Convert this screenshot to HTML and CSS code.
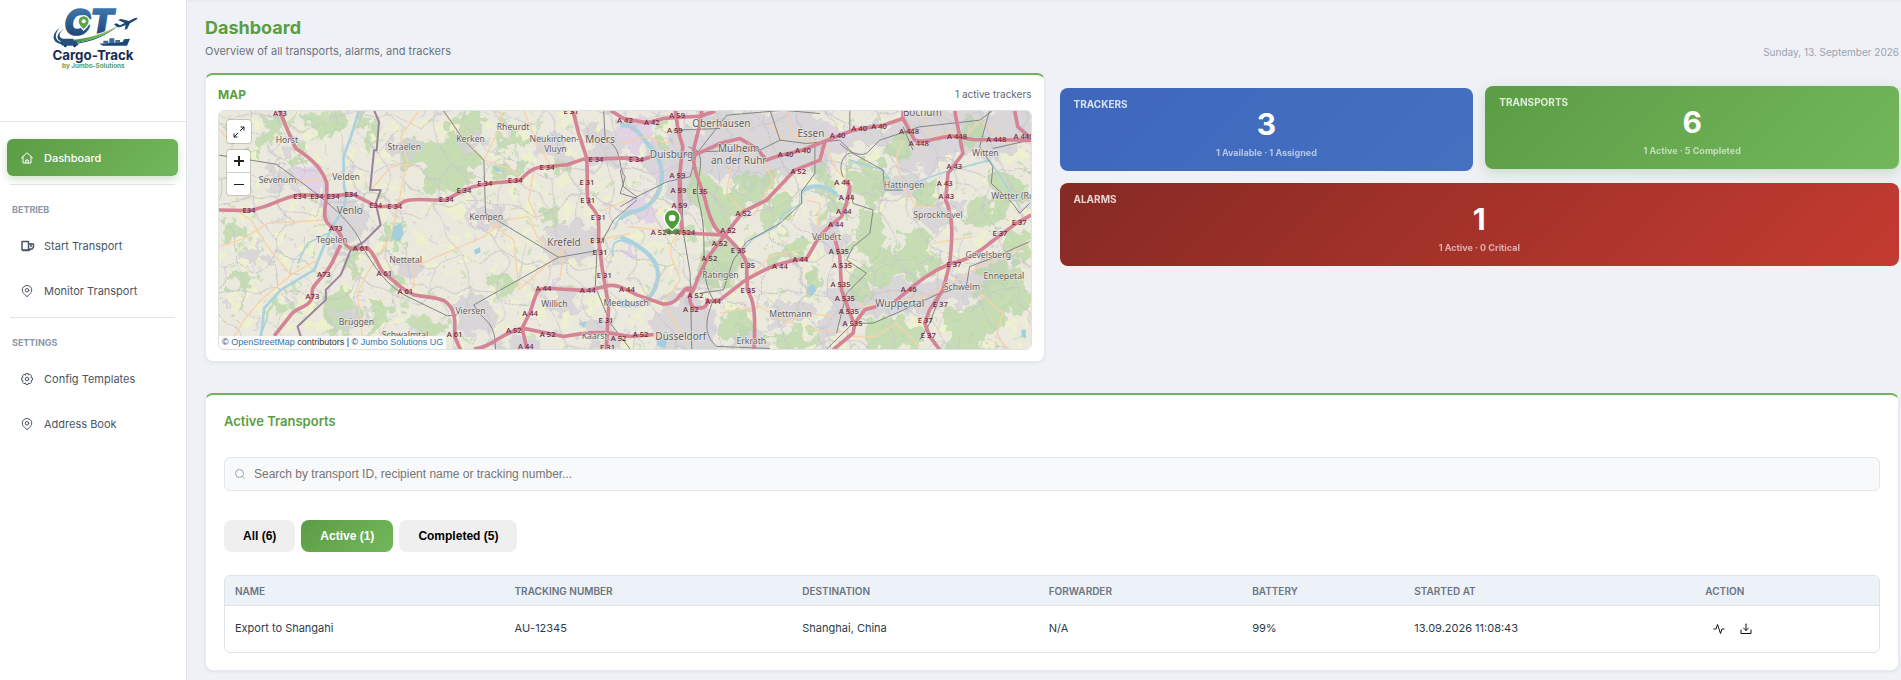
FILE: index.html
```html
<!DOCTYPE html>
<html lang="en">
<head>
<meta charset="utf-8">
<title>Cargo-Track Dashboard</title>
<link rel="stylesheet" href="styles.css">
</head>
<body>
<div class="app">
  <aside class="sidebar">
    <div class="brand">
      <svg class="logo" viewBox="0 0 330 240" role="img" aria-label="Cargo-Track by Jumbo-Solutions">
        <defs>
          <linearGradient id="blue" x1="0" y1="0" x2="0" y2="1"><stop offset="0" stop-color="#4583bb"/><stop offset="1" stop-color="#173b6b"/></linearGradient>
          <linearGradient id="swoosh" x1="0" y1="0" x2="1" y2="0"><stop offset="0" stop-color="#1d4674"/><stop offset=".5" stop-color="#5fae4d"/><stop offset="1" stop-color="#9ccb6a"/></linearGradient>
        </defs>
        <text class="logo-mark" x="73" y="104" fill="url(#blue)" stroke="url(#blue)">C</text>
        <text class="logo-mark" x="150" y="104" fill="url(#blue)" stroke="url(#blue)">T</text>
        <path d="M131 47c-10 0-17 8-17 17 0 11 17 26 17 26s17-15 17-26c0-9-7-17-17-17z" fill="#5aa646" stroke="#fff" stroke-width="4"/>
        <circle cx="131" cy="64" r="6" fill="#fff"/>
        <path d="M66 76C30 104 30 136 78 136c60 0 120-24 160-60-44 22-100 38-148 38-30 0-38-16-24-38z" fill="#fff"/>
        <path d="M60 82C30 106 34 134 80 134c52 0 112-20 158-58-48 34-106 54-150 54-44 0-50-22-28-48z" fill="#24507e"/>
        <path d="M72 86c-24 20-14 34 20 33 44-1 98-17 140-42-40 32-92 52-140 51-44 0-52-20-20-42z" fill="url(#swoosh)"/>
        <path d="M62 116h38v8h9l6 9-3 4H68l-6-5z" fill="#24507e"/>
        <circle cx="76" cy="138" r="4" fill="#163556"/><circle cx="104" cy="138" r="4" fill="#163556"/>
        <path d="M178 131l70-5 4-8 18-2-9 21h-72z" fill="#1c4674"/>
        <path d="M190 122h15v8h-15zM208 115h15v14h-15zM226 120h14v8h-14z" fill="#386b98"/>
        <path d="M222 73l8-3 10 6 14-7-20-9 9-3 24 6 16-8c9-4 14 0 3 6l-16 9-9 17-7 2 3-14-17 7-9-1z" fill="#1d4674"/>
        <text class="logo-name" x="159" y="180" text-anchor="middle">Cargo-Track</text>
        <text class="logo-sub" x="160" y="204" text-anchor="middle">by Jumbo-Solutions</text>
      </svg>
    </div>
    <nav class="nav">
      <a class="nav-item active" href="#"><svg class="icon" viewBox="0 0 24 24"><path d="M1 12 12 1.500 23 12M4 9.500V22h16V9.500M9.500 22v-6h5v6"/></svg>Dashboard</a>
      <hr class="nav-line">
      <h2 class="nav-title">BETRIEB</h2>
      <a class="nav-item" href="#"><svg class="icon truck" viewBox="0 0 28 24"><path d="M2 3h13v17H2zM15 19V8h10v6l-3 4h-4v2"/><path d="M4 21h12M20 8v5"/></svg>Start Transport</a>
      <a class="nav-item" href="#"><svg class="icon" viewBox="0 0 24 24"><path d="M12 23s9.500-6 9.500-13a9.500 9 0 0 0-19 0C2.500 17 12 23 12 23z"/><circle cx="12" cy="10.500" r="3.500"/></svg>Monitor Transport</a>
      <hr class="nav-line">
      <h2 class="nav-title">SETTINGS</h2>
      <a class="nav-item" href="#"><svg class="icon" viewBox="0 0 24 24"><path d="M9 4l1-3h4l1 3 3-1.500 3 3L20 9l3 1v4l-3 1 1 3.500-3 3-3-1.500-1 3h-4l-1-3-3 1.500-3-3L4 15l-3-1v-4l3-1-1-3.500 3-3z"/><circle cx="12" cy="12" r="3.500"/></svg>Config Templates</a>
      <a class="nav-item" href="#"><svg class="icon" viewBox="0 0 24 24"><path d="M12 23s9.500-6 9.500-13a9.500 9 0 0 0-19 0C2.500 17 12 23 12 23z"/><circle cx="12" cy="10.500" r="3.500"/></svg>Address Book</a>
    </nav>
  </aside>

  <main class="main">
    <header class="page-head">
      <div>
        <h1 class="page-title">Dashboard</h1>
        <p class="page-sub">Overview of all transports, alarms, and trackers</p>
      </div>
      <time class="date" datetime="2026-09-13">Sunday, 13. September 2026</time>
    </header>

    <div class="overview">
      <section class="card map-card">
        <div class="map-head"><h2 class="map-title">MAP</h2><span class="map-count">1 active trackers</span></div>
        <div class="map">
          <svg class="map-art" viewBox="54 150 2439 720" preserveAspectRatio="xMidYMid slice" role="img" aria-label="Map of the Rhine-Ruhr area">
            <defs>
              <filter id="ragged" x="0" y="0" width="2560" height="1000" filterUnits="userSpaceOnUse">
                <feTurbulence type="fractalNoise" baseFrequency=".022" numOctaves="3" seed="4"/>
                <feDisplacementMap in="SourceGraphic" scale="110" xChannelSelector="R" yChannelSelector="G"/>
              </filter>
              <filter id="winding" x="0" y="0" width="2560" height="1000" filterUnits="userSpaceOnUse">
                <feTurbulence type="fractalNoise" baseFrequency=".009" numOctaves="2" seed="9"/>
                <feDisplacementMap in="SourceGraphic" scale="90" xChannelSelector="R" yChannelSelector="G"/>
              </filter>
              <pattern id="lanes" width="330" height="270" patternUnits="userSpaceOnUse">
                <path class="lane" d="M0 60L60 85 110 50 180 75 240 30 330 60M60 85L45 170 90 270M90 0L110 50 150 140 140 200 220 270M0 200L45 170 150 140 230 160 330 200M240 30L230 160 265 215 220 270M220 0L240 30M300 0L285 110 330 130M0 130L45 170"/>
              </pattern>
              <pattern id="fields" width="210" height="170" patternUnits="userSpaceOnUse">
                <path class="field" d="M10 15l30-8 15 16-20 18zM80 45l34-10 12 18-26 20zM140 10l26 6-6 24-28-8zM30 90l26-6 10 26-30 10zM110 110l36-10 15 20-30 20zM170 66l24 8-10 24-20-6z"/>
                <path class="grove" d="M54 8l12-4 8 14-12 8zM120 56l12 4-4 14-12-4zM14 60l14 4-6 12zM90 96l12-6 6 12-12 4zM180 30l12-4 4 14-12 4zM150 146l14-4 6 10-12 6z"/>
                <path class="hamlet" d="M66 30l12-2 6 10-14 4zM160 100l14-4 4 12-12 4zM10 136l15-4 4 14-15 2zM100 8l10-4 6 10z"/>
              </pattern>
            </defs>
            <rect class="land" x="0" y="0" width="2560" height="1000"/>
            <g filter="url(#ragged)">
            <rect x="0" y="0" width="2560" height="1000" fill="url(#fields)"/>
            <g class="forest">
              <path d="M195 170l40-15 10 30-35 60-45 20zM310 170l80-20 50 10-30 50-60 40zM250 300l50-30 20 20-40 50zM130 270l50-20-10 30zM485 170l30-10 10 80-20 60-14-60zM590 250l40-20 90 20 70-20 40 60-10 60-60 30-70 20-40-30 30-40-70-20zM700 300l60-20 60 40-20 70-80 10zM740 180l60-20 60 10-20 60-70 10zM880 310l60-10 40 30-50 30zM1035 440l30-30 20 60-10 40-30-10zM530 520l40-40 30 50-30 40zM80 480l50 10-10 40-40 10zM90 640l50-10 20 60-60 10zM210 720l60-10 10 40-60 10zM385 700l50-10 40 60-50 70-60-10zM520 720l60 20-10 60-60 20zM620 750l60 10 60 50-60 20-60-30zM880 640l60 10-10 40-60-10zM440 550l30 20-10 60-30 20zM570 640l40 30-10 30zM900 230l50-10 20 30-60 20zM1060 290l40 0-10 50-40 0z"/>
            </g>
            <g class="urban">
              <path d="M245 225l50-5 5 50-50 10zM380 430l80-20 50 50-20 80-60 10-50-50zM570 240l80 0 0 40-70 10zM770 225l70-5 10 40-70 10zM820 440l90-10 10 70-70 10zM1010 220l90 10 0 70-80-10zM1150 190l110 10 10 100-100 20zM1040 500l130-20 30 80-70 60-90-20zM580 600l80 0 10 50-70 10zM1020 700l90 0 10 60-80 10zM760 720l110 0 20 90-90 10zM400 760l110 0-10 50-90-10zM1140 790l100 0 10 70-90 10zM200 330l80 10-10 50-70-10zM370 540l50 0 10 40-50 10zM130 550l60 0 0 50-60 10zM920 830l120 10-10 40-120 0z"/>
            </g>
            <path class="industry" d="M280 330l90-10 0 60-80 20zM350 385l40 0-10 60-30-10zM1055 640l30 0 0 40-30 0z"/>
            <g transform="translate(1260 0)">
              <path class="urban" d="M90 240l110-30 50 90-30 140-70 20-30-110-60-40zM230 150l360-10 60 90 160-40 40-50 390 0 10 110-100 40-160-10-60 60-70-10-40-80-120 10-90 70-130 20-70 30-100-30-90-10zM580 490l80-10 30 70-70 40zM120 700l130 20 50 70-10 90-180 0-20-90zM640 690l260-30 90 20 160-120 60 10-60 110-180 60-120 20-170 10-40 90-60 0zM230 620l110 0 10 60-110 10zM340 800l110 0 0 80-110 0zM440 720l130 10-20 60-100 0zM880 430l130 10 0 60-120 0zM780 350l140-10 10 60-140 0zM970 650l130 0 0 60-120 0z"/>
              <path class="industry" d="M10 160l60 0 30 60-50 60-50-50zM60 410l70 40-40 40-60-20zM120 300l40 20 0 60-30-10zM10 540l40 30-30 30zM620 200l70 0-10 40-60-10z"/>
              <path class="forest" d="M210 350l40-20 40 60 70 0 20 60-60 70-60-20-40-70zM265 540l80 0 30 60-20 80-80 10-50-40 20-70zM130 510l80-10 0 30-70 10zM310 740l50-10 40 60-30 60-60-10zM360 350l80-20 20 40-40 60-50 10zM450 400l60 0 20 50-60 40-60 0zM450 560l80 0 40-40 20 40-60 50-90 10zM600 400l60 0 10 50-60 30zM690 290l100 20 30 70-60 60-60-50zM720 450l60 10 30 60-60 70-50-20zM820 220l60 20-20 60-60-10zM880 380l60-10 20 50-60 10zM1030 170l60 10 10 60-60 30zM1110 350l100-10 30 60-70 60-60-20zM1030 450l80-20 60 30-100 50zM1080 620l120-10 30 130-90 60-60-60zM980 750l90-20 60 60-40 90-120 0zM720 780l130-10 60 40-20 60-150 0zM760 570l60 0 50 70-80 50-60-40zM700 640l50 10 0 70-60-10zM840 520l100 10 20 90-80 40-50-60zM560 640l50 0 10 40-50 10zM450 820l90-10 70 50-130 20zM560 340l50-40 30 50-60 30zM1150 500l80 10 0 90-60-10zM100 200l40 0 10 60-40-20z"/>
            </g>
            </g>

            <path class="water" d="M475 150L450 230 428 290 430 380C450 440 400 480 385 520L340 630 240 690 190 745 180 830"/>
            <path class="water thin" d="M1240 510c20-50 40-60 60-60M1290 550c-40-20-60 0-50 40M170 850l30-80M380 520l-60 30-30 60"/>
            <path class="pond" d="M575 500l25-10 10 30-15 25-25-10zM820 570l18-8 2 16-16 6zM875 315l20 10 20 12-30-4zM1135 790l24-4-8 16zM900 475l30 4-20 8z"/>
            <g transform="translate(1260 0)">
              <path class="water wide" d="M0 195C50 190 60 230 90 260C130 300 140 370 100 420C70 460 20 450 0 478M0 530C60 555 125 600 112 660C100 730 40 740 0 735"/>
              <path class="water wide" d="M545 395C570 375 610 370 650 402"/>
              <path class="water thin" d="M545 395L545 430 490 460 470 500 400 535 350 590M650 402L690 430M690 300L790 330 830 390 960 340 1110 300 1200 440"/>
              <path class="pond" d="M565 680l15-8 10 20-15 18-12-10zM110 835l30 4-4 26-24-6zM1205 810l14 0 0 26-12-6zM540 530l10-4 4 12z"/>
            </g>
            <g filter="url(#winding)"><rect x="0" y="0" width="2560" height="1000" fill="url(#lanes)"/></g>

            <g class="road">
              <path d="M54 205L90 250M54 560L130 535 200 490 370 480M90 440L150 480 200 560 270 645 350 600M270 645L180 720 130 780 100 830M655 150L600 230 620 300 600 400 570 530 500 640 470 700 485 830M510 390L570 320 640 310M725 150L790 240 850 300M900 150C910 210 880 230 860 280L850 300 940 330 960 360M970 150L1010 250 1060 330M910 480L985 470 1010 530 1075 590M910 480L850 530 640 620 640 680 600 710M870 490L940 540 955 690M955 690L1100 560 1290 520M1010 480L985 420 1000 330M1080 650L1090 560M285 365L370 355M1210 450L1280 420M380 340L440 360"/>
              <g transform="translate(1260 0)">
                <path d="M0 250L70 230 150 250M120 510L20 500M180 520C120 560 170 620 180 660L130 730 200 850M340 270L320 400 370 455M430 300L460 360 400 470M450 190L500 250M560 420L600 430 590 540M620 260L650 330 700 380M850 240L830 290 850 380 890 440 950 440M900 150L940 230 1010 210M380 660L450 590 540 570M300 760L420 740 500 790 560 760 640 770M560 800C600 830 680 800 700 830L770 830 830 790 900 860M720 740L830 730 940 700 1080 620 1230 550M1060 530L940 550M1030 240L1080 180 1180 260M60 830L150 830M1080 700L1150 760 1130 830 1170 870M500 150L520 230 600 250"/>
              </g>
            </g>

            <g class="rail">
              <path d="M54 285L225 312C350 400 460 480 485 560C520 620 560 680 620 710L740 768 770 765M728 150L790 240 850 300 855 460 1075 592 1190 572M1075 592L820 735C850 790 885 780 885 868M1210 150L1215 240C1270 260 1250 320 1275 350L1260 400 1310 415M1190 572L1185 680 1230 790 1290 868M1190 572L1240 480 1310 420"/>
              <g transform="translate(1260 0)">
                <path d="M205 260L230 270C260 310 220 360 235 420C270 540 230 640 280 720C250 790 255 830 290 860L450 866M182 340L190 520 210 640 215 868M0 440L50 410 140 365 210 350 230 280 320 165 490 150 600 160M220 275L420 270 480 240 560 250 660 240 700 280 790 330 795 390 850 390M450 150L480 240M690 150L690 210M660 250C680 270 710 290 740 280L780 240 900 200 1080 180 1120 150M690 390L700 430 760 450 750 520 700 560 680 600M585 250L585 340 545 395 545 430 480 490 380 545 340 600 310 690 240 700M670 350C650 310 680 270 700 280M1110 150L1080 260 1120 320 1115 370 1180 430 1200 460 1230 430M1230 545L1130 590 1050 620 1040 680 960 700 830 760 760 790 700 790 620 868M680 600L740 640 680 700 650 820M850 200L880 270M1120 265L1230 240M960 710L930 790 900 840M0 330L10 380 50 410M160 210L300 205"/>
              </g>
            </g>
            <path class="frontier" d="M520 150L535 185 528 270 520 270 508 390 540 390 525 430 540 495 490 545 450 570 420 645 375 690 375 720 290 800 300 830"/>

            <g class="motorway">
              <path d="M236 150L262 215 285 265C340 300 365 330 378 370L378 400 372 450C368 490 390 500 405 506C430 530 425 560 455 566L500 564C530 590 530 620 550 640C580 660 600 690 640 705C700 715 700 710 730 722C765 745 765 780 762 830L780 870M420 555C400 590 395 620 370 642C340 680 330 680 335 710C325 745 290 740 270 765L220 828"/>
              <path d="M54 450L140 452C220 440 240 410 300 404L378 408 455 402 500 425 530 440 590 438C620 410 650 420 735 420L790 390C850 365 900 370 960 360C990 325 1010 320 1040 320L1100 314 1150 297 1310 293"/>
              <path d="M1105 130L1120 160 1135 220 1158 290C1165 340 1155 400 1165 430C1200 470 1195 470 1195 540L1205 620 1225 740 1218 870"/>
              <path d="M980 870L965 805 990 755C1010 690 1010 685 1040 685L1160 692 1215 680C1240 670 1260 680 1310 705L1390 733C1440 730 1430 705 1460 685L1480 685M820 868C880 860 900 820 965 805L1090 830C1150 820 1180 815 1230 820L1290 830 1360 824"/>
              <g transform="translate(1260 0)">
                <path d="M-30 150L10 175 80 188 130 175 170 172 240 168 285 153M0 293L60 300 95 290M165 150L175 215 188 260 178 350 178 440 185 516M245 150L240 190 220 270C215 340 250 380 260 440C275 490 290 520 315 525C350 560 380 590 380 620L382 690C400 720 408 750 402 870"/>
                <path d="M140 515L250 522 315 525M190 280L230 282 300 250 360 235 410 265 440 300C500 275 530 280 560 265L610 245 700 210 790 195 850 175 850 150M850 175L885 240C930 250 940 230 1000 228L1060 238 1235 240M1185 150L1195 200 1230 230"/>
                <path d="M615 245L600 300 525 330 440 420 370 455 315 525 265 590 235 650 220 690C200 710 210 750 235 745C260 745 265 730 260 715M220 690L195 690 180 710M260 725L300 720 370 665C430 630 460 610 560 595C590 550 590 530 640 490L665 470 680 430 690 380 675 360M640 520L660 590 665 690 700 785M1005 150L1020 230 1030 280 985 340 978 420C1000 470 1000 520 990 612L970 690 930 750 915 790 930 830 960 870"/>
                <path d="M1235 465L1190 490 1110 550C1060 590 1040 600 990 612C920 640 880 680 825 725M770 740L735 750 705 790 700 820 640 870"/>
              </g>
            </g>

            <g class="shield">
              <text x="237" y="168">A73</text><text x="297" y="416">E34</text><text x="348" y="416">E34</text><text x="397" y="416">E34</text><text x="451" y="411">E34</text><text x="144" y="460">E34</text><text x="525" y="443">E34</text><text x="582" y="448">E 34</text><text x="405" y="513">A73</text><text x="480" y="574">A 61</text><text x="369" y="650">A73</text><text x="335" y="718">A73</text><text x="551" y="648">A 61</text><text x="614" y="702">A 61</text><text x="762" y="831">A 61</text><text x="737" y="425">E 34</text><text x="790" y="399">E 34</text><text x="853" y="378">E 34</text><text x="944" y="369">E 34</text><text x="1040" y="329">E 34</text><text x="1187" y="306">E 34</text><text x="1112" y="161">E 31</text><text x="1160" y="374">E 31</text><text x="1162" y="430">E 31</text><text x="1194" y="480">E 31</text><text x="1192" y="549">E 31</text><text x="1199" y="586">E 31</text><text x="1212" y="654">E 31</text><text x="1217" y="791">E 31</text><text x="1029" y="694">A 44</text><text x="1162" y="698">A 44</text><text x="989" y="768">A 44</text><text x="940" y="820">A 52</text><text x="1042" y="831">A 52</text><text x="976" y="869">A 44</text><text x="1255" y="843">A 52</text><text x="1222" y="872">E 31</text>
              <g transform="translate(1260 0)">
                <text x="14" y="187">A 42</text><text x="95" y="193">A 42</text><text x="171" y="174">A 59</text><text x="164" y="219">A 59</text><text x="48" y="306">E 34</text><text x="172" y="355">A 59</text><text x="175" y="398">A 59</text><text x="178" y="445">A 59</text><text x="240" y="402">E 35</text><text x="122" y="526">A 524</text><text x="195" y="526">A 524</text><text x="324" y="520">A 52</text><text x="299" y="559">A 52</text><text x="268" y="603">A 52</text><text x="370" y="469">A 52</text><text x="535" y="341">A 52</text><text x="497" y="290">A 40</text><text x="549" y="278">A 40</text><text x="653" y="234">A 40</text><text x="718" y="211">A 40</text><text x="778" y="205">A 40</text><text x="868" y="220">A 448</text><text x="897" y="257">A 448</text><text x="1012" y="236">A 448</text><text x="1130" y="247">A 448</text><text x="1212" y="235">A 448</text><text x="1004" y="326">A 43</text><text x="975" y="378">A 43</text><text x="980" y="418">A 43</text><text x="667" y="376">A 44</text><text x="680" y="420">A 44</text><text x="672" y="462">A 44</text><text x="648" y="501">A 44</text><text x="657" y="583">A 535</text><text x="667" y="625">A 535</text><text x="662" y="682">A 535</text><text x="675" y="723">A 535</text><text x="687" y="762">A 535</text><text x="698" y="799">A 535</text><text x="355" y="579">E 35</text><text x="383" y="623">E 35</text><text x="384" y="700">E 35</text><text x="480" y="627">A 44</text><text x="541" y="607">A 44</text><text x="20" y="696">A 44</text><text x="226" y="715">A 52</text><text x="279" y="731">A 44</text><text x="212" y="757">A 52</text><text x="61" y="833">A 52</text><text x="867" y="697">A 46</text><text x="1199" y="495">E 37</text><text x="1141" y="528">E 37</text><text x="1003" y="620">E 37</text><text x="962" y="742">E 37</text><text x="917" y="789">E 37</text><text x="926" y="835">E 37</text>
              </g>
            </g>
            <g class="town">
              <text x="258" y="248">Horst</text><text x="230" y="368">Sevenum</text><text x="436" y="360">Velden</text><text x="611" y="270">Straelen</text><text x="810" y="247">Kerken</text><text x="938" y="208">Rheurdt</text><text x="1062" y="247">Neukirchen-</text><text x="1065" y="277">Vluyn</text><text x="393" y="550">Tegelen</text><text x="615" y="608">Nettetal</text><text x="857" y="480">Kempen</text><text x="810" y="762">Viersen</text><text x="467" y="797">Brüggen</text><text x="613" y="835">Schwalmtal</text><text x="1062" y="742">Willich</text><text x="1278" y="739">Meerbusch</text><text x="1183" y="839">Kaarst</text>
              <text class="city" x="447" y="462">Venlo</text><text class="city" x="1199" y="248">Moers</text><text class="city" x="1091" y="559">Krefeld</text>
              <g transform="translate(1260 0)">
                <text class="city" x="304" y="200">Oberhausen</text><text class="city" x="154" y="293">Duisburg</text><text class="city" x="356" y="276">Mülheim</text><text class="city" x="356" y="311">an der Ruhr</text><text class="city" x="573" y="230">Essen</text><text class="city" x="908" y="168">Bochum</text><text class="city" x="182" y="840">Düsseldorf</text><text class="city" x="840" y="740">Wuppertal</text><text x="1097" y="288">Witten</text><text x="853" y="384">Hattingen</text><text x="1180" y="417">Wetter (Ru</text><text x="955" y="473">Sprockhövel</text><text x="620" y="541">Velbert</text><text x="1106" y="593">Gevelsberg</text><text x="1153" y="656">Ennepetal</text><text x="1027" y="689">Schwelm</text><text x="301" y="654">Ratingen</text><text x="512" y="771">Mettmann</text><text x="394" y="854">Erkrath</text>
              </g>
            </g>
            <g transform="translate(1260 0)">
              <ellipse cx="156" cy="513" rx="26" ry="9" fill="#3d8a35" opacity=".7"/>
              <path d="M156 449c-14 0-24 11-24 25 0 17 24 37 24 37s24-20 24-37c0-14-10-25-24-25z" fill="#4b9b3a" stroke="#fff" stroke-width="4"/>
              <circle cx="156" cy="474" r="10" fill="#fff"/>
            </g>
          </svg>
          <div class="map-tools">
            <button class="tool full" type="button" aria-label="Full screen"><svg class="tool-icon" viewBox="0 0 12 12"><path d="M7.500 1H11v3.500M11 1 7 5M4.500 11H1V7.500M1 11l4-4"/></svg></button>
            <div class="zoom">
              <button class="tool" type="button" aria-label="Zoom in"><svg class="tool-icon bold" viewBox="0 0 12 12"><path d="M6 1v10M1 6h10"/></svg></button>
              <button class="tool" type="button" aria-label="Zoom out"><svg class="tool-icon" viewBox="0 0 12 12"><path d="M1 6.500h10"/></svg></button>
            </div>
          </div>
          <div class="credits">© <a href="#">OpenStreetMap</a> contributors | © <a href="#">Jumbo Solutions UG</a></div>
        </div>
      </section>

      <div class="stats">
        <section class="stat blue"><h2 class="stat-label">TRACKERS</h2><strong class="stat-value">3</strong><span class="stat-note">1 Available · 1 Assigned</span></section>
        <section class="stat green"><h2 class="stat-label">TRANSPORTS</h2><strong class="stat-value">6</strong><span class="stat-note">1 Active · 5 Completed</span></section>
        <section class="stat red"><h2 class="stat-label">ALARMS</h2><strong class="stat-value">1</strong><span class="stat-note">1 Active · 0 Critical</span></section>
      </div>
    </div>

    <section class="card list-card">
      <h2 class="list-title">Active Transports</h2>
      <label class="search">
        <svg class="search-icon" viewBox="0 0 12 12"><circle cx="5.500" cy="5.500" r="4"/><path d="M8.500 8.500 10.500 10.500"/></svg>
        <input class="search-input" type="text" aria-label="Search transports" placeholder="Search by transport ID, recipient name or tracking number...">
      </label>
      <div class="tabs">
        <button class="tab" type="button">All (6)</button>
        <button class="tab on" type="button">Active (1)</button>
        <button class="tab" type="button">Completed (5)</button>
      </div>
      <div class="table-box">
        <table class="table">
          <colgroup><col class="c-name"><col class="c-num"><col class="c-dest"><col class="c-fwd"><col class="c-bat"><col class="c-start"><col class="c-act"></colgroup>
          <thead><tr><th>NAME</th><th>TRACKING NUMBER</th><th>DESTINATION</th><th>FORWARDER</th><th>BATTERY</th><th>STARTED AT</th><th>ACTION</th></tr></thead>
          <tbody><tr><td>Export to Shangahi</td><td>AU-12345</td><td>Shanghai, China</td><td>N/A</td><td>99%</td><td>13.09.2026 11:08:43</td>
            <td><div class="actions">
              <button class="act" type="button" aria-label="Activity"><svg class="act-icon" viewBox="0 0 24 24"><path d="M22 12h-4l-3 9L9 3l-3 9H2"/></svg></button>
              <button class="act" type="button" aria-label="Download"><svg class="act-icon" viewBox="0 0 24 24"><path d="M2 14v7h20v-7M7 10l5 5 5-5M12 15V2"/></svg></button>
            </div></td></tr></tbody>
        </table>
      </div>
    </section>
  </main>
</div>
</body>
</html>
```
FILE: styles.css
```css
* { box-sizing: border-box; }
body { margin: 0; background: #eff1f6; color: #2f3a4a; font-family: Inter, "Liberation Sans", sans-serif; font-size: 11px; }
h1, h2, p { margin: 0; }
a { text-decoration: none; }
button { font: inherit; border: 0; padding: 0; cursor: pointer; }
svg { display: block; }

.app { display: flex; min-height: 100vh; }

.sidebar { flex: 0 0 187px; background: #fff; border-right: 1px solid #e0e3e8; }
.brand { height: 122px; padding-left: 40px; border-bottom: 1px solid #dfe2e6; }
.logo { width: 110px; height: 80px; }
.logo-mark { font: italic 800 106px Inter, sans-serif; stroke-width: 5px; }
.logo-name { font: 700 40px Inter, sans-serif; fill: #182d50; }
.logo-sub { font: 700 19px Inter, sans-serif; fill: #5d9c58; }
.nav { padding: 17px 8px 17px 7px; }
.nav-item { display: flex; align-items: center; gap: 11px; height: 37px; margin-bottom: 8px; padding: 0 14px; border-radius: 6px; color: #4b5563; font-size: 11px; font-weight: 400; white-space: nowrap; }
.nav-item.active { background: linear-gradient(135deg, #5b9d44, #73b75c); color: #fff; font-weight: 500; box-shadow: 0 3px 8px rgba(91, 157, 68, .3); }
.icon { flex: none; width: 12px; height: 12px; fill: none; stroke: currentColor; stroke-width: 2; stroke-linejoin: round; stroke-linecap: round; }
.truck { margin-right: -2px; width: 14px; stroke-width: 3; }
.nav-line { height: 1px; margin: 0 3px 19px; border: 0; background: #e0e3e8; }
.nav-title { margin: 0 5px 11px; font-size: 9px; line-height: 12px; font-weight: 700; color: #8b97a6; }

.main { flex: 1; min-width: 0; padding: 14px 2px 10px 18px; border-top: 2px solid #e9ebf0; }
.page-head { display: flex; justify-content: space-between; align-items: flex-end; margin-bottom: 14px; }
.page-title { font-size: 18px; line-height: 24px; font-weight: 700; color: #5b9d44; }
.page-sub { margin-top: 3px; font-size: 11px; line-height: 16px; color: #6b7482; }
.date { font-size: 10px; line-height: 14px; color: #9aa3b2; }

.card { background: #fff; border: 1px solid #e6e9ef; border-top: 2px solid #73b060; border-radius: 8px; box-shadow: 0 1px 3px rgba(30, 50, 80, .08); }
.overview { display: grid; grid-template-columns: 1fr 1fr; gap: 15px; align-items: start; margin-bottom: 31px; }
.map-card { padding: 11px 12px; }
.map-head { display: flex; justify-content: space-between; align-items: center; height: 16px; margin-bottom: 8px; }
.map-title { font-size: 12px; font-weight: 700; color: #5b9d44; }
.map-count { font-size: 10px; color: #5f6875; }
.map { position: relative; height: 240px; border: 1px solid #dfe2e2; border-radius: 6px; overflow: hidden; }
.map-art { width: 100%; height: 100%; }
.land { fill: #ebe9dd; }
.field { fill: #eef1cd; }
.grove { fill: #cbe0b8; }
.hamlet { fill: #dad7dc; }
.forest { fill: #b9d7a7; opacity: .75; }
.urban { fill: #d3d1d7; opacity: .8; }
.industry { fill: #e2d3e4; }
.lane { fill: none; stroke: #c8c4cd; stroke-width: 3; stroke-linejoin: round; }
.water { fill: none; stroke: #a8d3de; stroke-width: 8; stroke-linejoin: round; }
.water.thin { stroke-width: 5; }
.water.wide { stroke-width: 13; }
.pond { fill: #a0cfdd; }
.road { fill: none; stroke: #f8d2a6; stroke-width: 4; stroke-linejoin: round; }
.rail { fill: none; stroke: #838585; stroke-width: 3; stroke-linejoin: round; }
.frontier { fill: none; stroke: #9a819d; stroke-width: 6; stroke-linejoin: round; }
.motorway { fill: none; stroke: #d48494; stroke-width: 11; stroke-linejoin: round; }
.shield { font: 500 23px "Noto Sans", sans-serif; fill: #71253c; text-anchor: middle; }
.town { font: 26px "Noto Sans", sans-serif; fill: #5d5a5d; text-anchor: middle; stroke: #f2f0ea; stroke-width: 3; paint-order: stroke; }
.town .city { font-size: 30px; }

.map-tools { position: absolute; top: 9px; left: 8px; }
.tool { display: grid; place-items: center; width: 23px; height: 22px; background: #fff; color: #222; }
.full { width: 24px; height: 23px; margin-bottom: 7px; border-radius: 3px; box-shadow: 0 0 0 1px rgba(0, 0, 0, .15); }
.zoom { display: grid; gap: 1px; width: 23px; border-radius: 3px; background: #ccc; overflow: hidden; box-shadow: 0 0 0 1px rgba(0, 0, 0, .15); }
.tool-icon { width: 12px; height: 12px; fill: none; stroke: currentColor; stroke-width: 1; }
.tool-icon.bold { stroke-width: 2; }
.credits { position: absolute; left: 0; bottom: 0; padding: 0 3px; background: rgba(255, 255, 255, .85); font: 9px/13px "Liberation Sans", sans-serif; color: #333; white-space: nowrap; }
.credits a { color: #3077b0; }

.stats { display: grid; grid-template-columns: 1fr 1fr; gap: 12px; padding-top: 15px; }
.stat { display: flex; flex-direction: column; align-items: center; padding: 9px 14px 11px; border-radius: 8px; color: #fff; }
.stat-label { align-self: flex-start; font-size: 10px; line-height: 14px; font-weight: 700; opacity: .8; }
.stat-value { margin-bottom: 9px; font-size: 30px; line-height: 26px; font-weight: 700; }
.stat-note { font-size: 9px; line-height: 14px; font-weight: 700; opacity: .6; }
.blue { background: linear-gradient(135deg, #3e67bc, #4571c1); }
.green { background: linear-gradient(135deg, #5b9d44, #73b75c); box-shadow: 0 4px 14px rgba(91, 157, 68, .25); transform: translateY(-2px); }
.red { grid-column: 1 / -1; background: linear-gradient(135deg, #862a24, #c43b30); }

.list-card { padding: 17px 18px; }
.list-title { margin-bottom: 27px; font-size: 13px; line-height: 18px; font-weight: 600; color: #5b9d44; }
.search { display: flex; align-items: center; gap: 8px; height: 34px; margin-bottom: 29px; padding: 0 9px; border: 1px solid #e3e6ea; border-radius: 6px; background: #f8f9fb; }
.search-icon { flex: none; width: 12px; height: 12px; fill: none; stroke: #98a1ae; stroke-width: 1; }
.search-input { flex: 1; min-width: 0; border: 0; padding: 0; outline: 0; background: none; font: 12px "Liberation Sans", sans-serif; }
.search-input::placeholder { color: #757575; }
.tabs { display: flex; gap: 6px; margin-bottom: 23px; }
.tab { height: 32px; padding: 0 19px; border-radius: 8px; background: #efefef; color: #000; font: 700 12px "Liberation Sans", sans-serif; }
.tab.on { background: linear-gradient(135deg, #5b9d44, #73b75c); color: #fff; }

.table-box { border: 1px solid #dfe2e7; border-radius: 6px; overflow: hidden; }
.table { width: 100%; table-layout: fixed; border-collapse: separate; border-spacing: 0; }
.table th { height: 30px; padding: 0 10px; border-bottom: 1px solid #dfe2e7; background: #edf1f8; text-align: left; font-size: 10px; font-weight: 600; color: #6b7482; }
.table td { height: 46px; padding: 0 10px 2px; font-size: 11px; }
.c-name { width: 16.9%; } .c-num { width: 17.4%; } .c-dest { width: 14.9%; } .c-fwd { width: 12.3%; } .c-bat { width: 9.8%; } .c-start { width: 17.6%; } .c-act { width: 11.1%; }
.actions { display: flex; gap: 15px; padding: 2px 0 0 8px; }
.act { background: none; color: #111; }
.act-icon { width: 12px; height: 12px; fill: none; stroke: currentColor; stroke-width: 2; stroke-linecap: round; stroke-linejoin: round; }
```
